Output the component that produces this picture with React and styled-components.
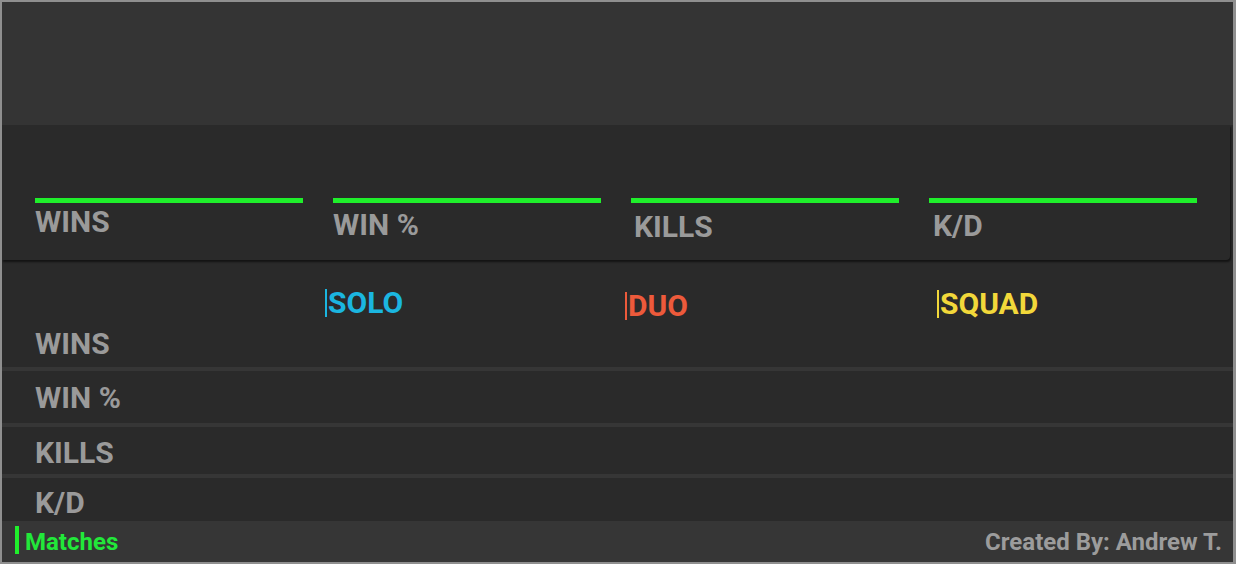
import React from "react";
import styled, { createGlobalStyle } from "styled-components";

const GlobalStyle = createGlobalStyle`
  html, body { margin: 0; padding: 0; background: #8f8f8f; }
  body { font-family: Roboto, "Liberation Sans", Arial, sans-serif; }
  * { box-sizing: border-box; }
`;

const Frame = styled.div`
  width: 1236px;
  height: 564px;
  border: 2px solid #8f8f8f;
  border-right-width: 3px;
  background: #2a2a2a;
  display: flex;
  flex-direction: column;
  overflow: hidden;
`;

const TopBar = styled.header`
  height: 123px;
  flex-shrink: 0;
  background: #343434;
`;

const SummaryCard = styled.section`
  position: relative;
  z-index: 1;
  height: 135px;
  flex-shrink: 0;
  margin-right: 3px;
  background: #2a2a2a;
  border-radius: 0 0 4px 0;
  box-shadow: 1px 2px 2px rgba(0, 0, 0, 0.55);
  display: grid;
  grid-template-columns: repeat(4, 1fr);
  column-gap: 30px;
  padding: 73px 33px 0 33px;
`;

const SummaryColumn = styled.div`
  display: flex;
  flex-direction: column;
`;

const GreenBar = styled.div`
  height: 5px;
  background: #1fef2b;
`;

const StatLabel = styled.div`
  margin-top: ${(p) => p.$offset || 0}px;
  padding-left: ${(p) => p.$indent || 0}px;
  font-size: 30px;
  line-height: 30px;
  font-weight: 700;
  color: #9a9a9a;
  white-space: nowrap;
`;

const StatRow = styled.div`
  height: ${(p) => p.$height}px;
  flex-shrink: 0;
  padding: ${(p) => p.$padTop}px 0 0 33px;
  background: #2a2a2a;
  border-top: ${(p) => (p.$first ? "0" : "4px solid #363636")};
  box-sizing: content-box;
`;

const ModeHeaderRow = styled.div`
  display: grid;
  grid-template-columns: 290px 300px 312px 1fr;
  align-items: start;
  height: 28px;
  margin-bottom: 12px;
`;

const ModeTitle = styled.div`
  justify-self: start;
  margin-top: ${(p) => p.$offset || 0}px;
  padding-left: 1px;
  border-left: 2px solid ${(p) => p.$color};
  color: ${(p) => p.$color};
  font-size: 30px;
  line-height: 28px;
  font-weight: 700;
`;

const Footer = styled.footer`
  margin-top: auto;
  height: 41px;
  flex-shrink: 0;
  background: #363636;
  display: flex;
  align-items: flex-end;
  justify-content: space-between;
  padding: 0 11px 8px 13px;
`;

const FooterTab = styled.div`
  display: flex;
  align-items: flex-end;
  gap: 6px;
`;

const TabMarker = styled.span`
  width: 4px;
  height: 28px;
  background: #1fef2b;
`;

const FooterText = styled.span`
  font-size: 24px;
  line-height: 24px;
  font-weight: 700;
  color: ${(p) => p.$color};
  white-space: nowrap;
`;

const summary = [
  { label: "WINS", offset: 4, indent: 0 },
  { label: "WIN %", offset: 7, indent: 0 },
  { label: "KILLS", offset: 9, indent: 3 },
  { label: "K/D", offset: 8, indent: 4 },
];

const modes = [
  { name: "SOLO", color: "#1bb6e0", offset: 0 },
  { name: "DUO", color: "#ed5a3b", offset: 3 },
  { name: "SQUAD", color: "#f2d83a", offset: 1 },
];

const rows = [
  { label: "WIN %", height: 52, padTop: 12 },
  { label: "KILLS", height: 47, padTop: 11 },
  { label: "K/D", height: 43, padTop: 10 },
];

export default function App() {
  return (
    <>
      <GlobalStyle />
      <Frame>
        <TopBar />
        <SummaryCard>
          {summary.map((s) => (
            <SummaryColumn key={s.label}>
              <GreenBar />
              <StatLabel $offset={s.offset} $indent={s.indent}>
                {s.label}
              </StatLabel>
            </SummaryColumn>
          ))}
        </SummaryCard>
        <StatRow $first $height={78} $padTop={29}>
          <ModeHeaderRow>
            <span />
            {modes.map((m) => (
              <ModeTitle key={m.name} $color={m.color} $offset={m.offset}>
                {m.name}
              </ModeTitle>
            ))}
          </ModeHeaderRow>
          <StatLabel>WINS</StatLabel>
        </StatRow>
        {rows.map((r) => (
          <StatRow key={r.label} $height={r.height - r.padTop} $padTop={r.padTop}>
            <StatLabel>{r.label}</StatLabel>
          </StatRow>
        ))}
        <Footer>
          <FooterTab>
            <TabMarker />
            <FooterText $color="#22e83a">Matches</FooterText>
          </FooterTab>
          <FooterText $color="#9c9c9c">Created By: Andrew T.</FooterText>
        </Footer>
      </Frame>
    </>
  );
}
